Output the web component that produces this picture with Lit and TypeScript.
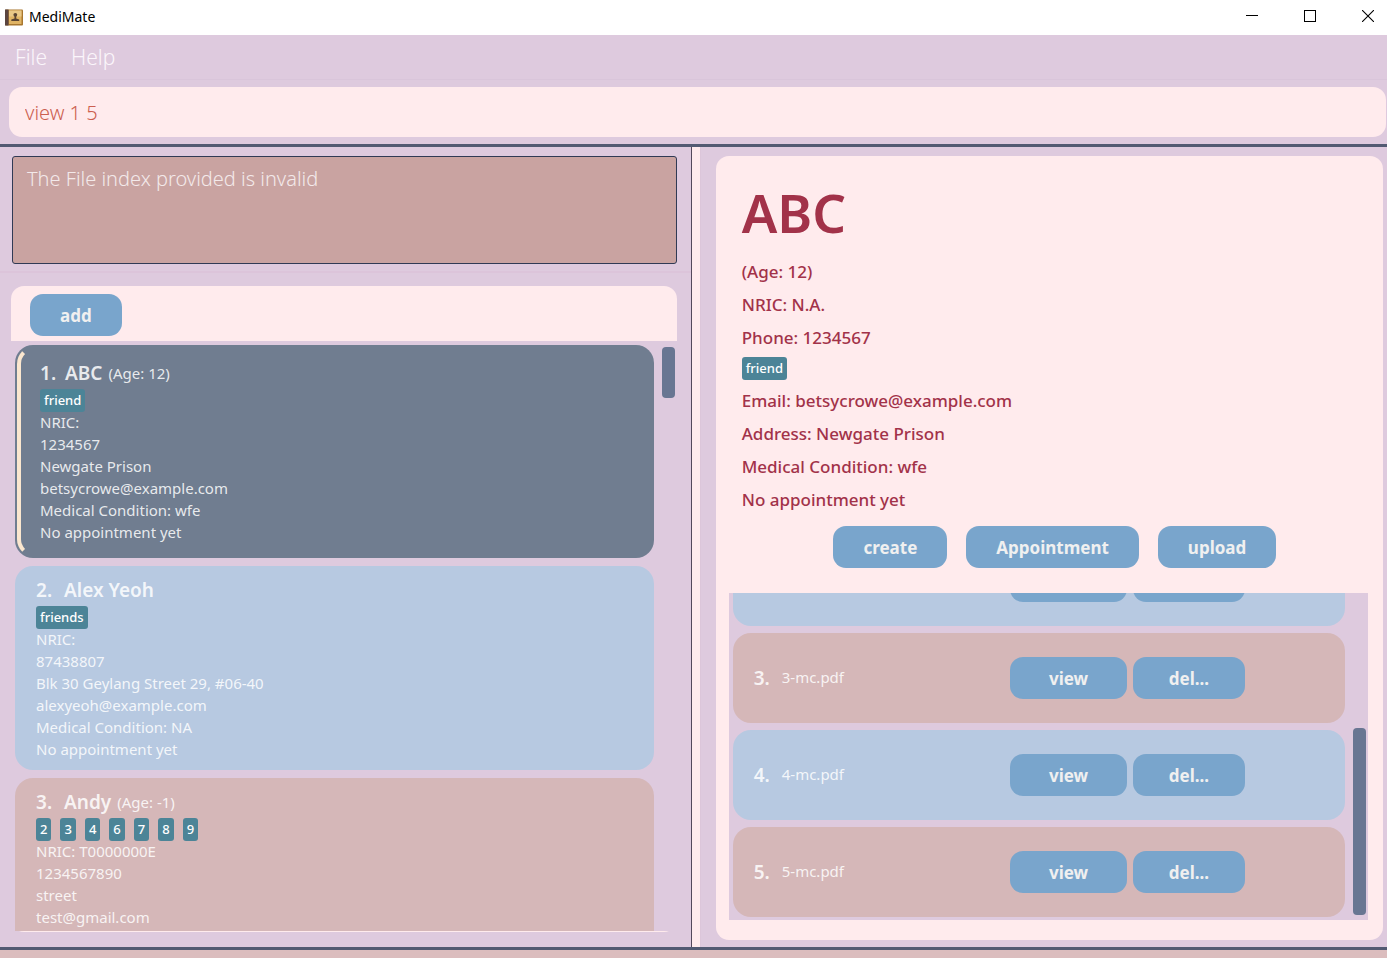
import { LitElement, html, css, nothing } from "lit";
import { customElement, property, state } from "lit/decorators.js";
import { classMap } from "lit/directives/class-map.js";

interface Patient {
  name: string;
  age?: string;
  tags: string[];
  lines: string[];
}

const PATIENTS: Patient[] = [
  {
    name: "ABC",
    age: "12",
    tags: ["friend"],
    lines: ["NRIC:", "1234567", "Newgate Prison", "betsycrowe@example.com", "Medical Condition: wfe", "No appointment yet"],
  },
  {
    name: "Alex Yeoh",
    tags: ["friends"],
    lines: ["NRIC:", "87438807", "Blk 30 Geylang Street 29, #06-40", "alexyeoh@example.com", "Medical Condition: NA", "No appointment yet"],
  },
  {
    name: "Andy",
    age: "-1",
    tags: ["2", "3", "4", "6", "7", "8", "9"],
    lines: ["NRIC: T0000000E", "1234567890", "street", "test@gmail.com", "Medical Condition: NA", "No appointment yet"],
  },
];

const buttonStyles = css`
  .btn {
    height: 42px;
    padding: 2px 30px 0;
    border: 0;
    border-radius: 13px;
    background: #79a5cc;
    color: #f0f0f0;
    font: 700 17px/24px "Noto Sans", "Open Sans", sans-serif;
    cursor: pointer;
  }
`;

const tagStyles = css`
  .tag {
    height: 23px;
    padding: 0 4px;
    border-radius: 3px;
    background: #4c8497;
    color: #fff;
    font: 500 13px/22px "Noto Sans", "Open Sans", sans-serif;
  }
`;

@customElement("title-bar")
export class TitleBar extends LitElement {
  static styles = css`
    :host {
      display: flex;
      align-items: center;
      flex: none;
      height: 35px;
      padding: 0 13px 0 5px;
      box-sizing: border-box;
      background: #fff;
      color: #000;
    }
    .logo {
      display: block;
      margin-right: 6px;
    }
    .title {
      flex: 1;
      padding-bottom: 2px;
      font-size: 14px;
      line-height: 32px;
    }
    .controls {
      display: flex;
      gap: 46px;
      padding-bottom: 3px;
    }
    .control {
      width: 12px;
      height: 12px;
      padding: 0;
      border: 0;
      background: none;
    }
    .control svg {
      display: block;
    }
  `;

  render() {
    return html`
      <svg class="logo" width="18" height="18" viewBox="0 0 18 18" aria-hidden="true">
        <rect x="0" y="0.5" width="18" height="16" rx="1" fill="#a8772f" />
        <rect x="0" y="0.5" width="3.5" height="16" fill="#5a4540" />
        <rect x="4" y="1.5" width="12.5" height="13.5" fill="#e0b464" />
        <rect x="4" y="1.5" width="12.5" height="6" fill="#e9c887" />
        <circle cx="10.3" cy="5.8" r="1.9" fill="#5a4432" />
        <path d="M9.5 7h1.700v2.500l3 1v1.500H6.300v-1.500l3.200-1z" fill="#5a4432" />
      </svg>
      <span class="title">MediMate</span>
      <div class="controls">
        <button class="control" aria-label="Minimize">
          <svg width="12" height="12" viewBox="0 0 12 12"><path d="M0 5.5h12" stroke="#000" /></svg>
        </button>
        <button class="control" aria-label="Maximize">
          <svg width="12" height="12" viewBox="0 0 12 12"><rect x="0.5" y="0.5" width="11" height="11" fill="none" stroke="#000" /></svg>
        </button>
        <button class="control" aria-label="Close">
          <svg width="12" height="12" viewBox="0 0 12 12"><path d="M0 0l12 12M12 0L0 12" stroke="#000" stroke-width="1.1" /></svg>
        </button>
      </div>
    `;
  }
}

@customElement("patient-card")
export class PatientCard extends LitElement {
  @property({ attribute: false }) patient!: Patient;
  @property({ type: Number }) index = 1;
  @property({ type: Boolean }) selected = false;

  static styles = [
    tagStyles,
    css`
      :host {
        display: block;
        flex: none;
      }
      .card {
        position: relative;
        padding: 10px 21px;
        border-radius: 18px;
        background: #b7c9e1;
        color: rgba(255, 255, 255, 0.85);
        font-size: 15px;
        line-height: 22px;
      }
      .odd {
        background: #d5b7b8;
      }
      .selected {
        padding: 14px 25px 15px;
        background: #707d90;
      }
      .selected::before {
        content: "";
        position: absolute;
        inset: 1px 2px;
        border: 4px solid transparent;
        border-left-color: #fbe7cf;
        border-radius: 18px;
      }
      .head {
        display: flex;
        height: 30px;
        line-height: 28px;
      }
      .number {
        width: 28px;
      }
      .number,
      .name {
        font-size: 19px;
        font-weight: 600;
      }
      .selected .number {
        width: 25px;
      }
      .age {
        margin-left: 6px;
      }
      .tags {
        display: flex;
        align-items: flex-start;
        gap: 9px;
        height: 22px;
      }
    `,
  ];

  render() {
    const { name, age, tags, lines } = this.patient;
    return html`
      <article class=${classMap({ card: true, odd: this.index % 2 === 1, selected: this.selected })}>
        <div class="head">
          <span class="number">${this.index}.</span>
          <span class="name">${name}</span>
          ${age ? html`<span class="age">(Age: ${age})</span>` : nothing}
        </div>
        <div class="tags">${tags.map((t) => html`<span class="tag">${t}</span>`)}</div>
        ${lines.map((l) => html`<div>${l}</div>`)}
      </article>
    `;
  }
}

@customElement("file-row")
export class FileRow extends LitElement {
  @property({ type: Number }) index = 1;

  static styles = [
    buttonStyles,
    css`
      :host {
        display: block;
        flex: none;
      }
      .row {
        display: flex;
        align-items: center;
        height: 90px;
        padding: 0 100px 0 21px;
        box-sizing: border-box;
        border-radius: 18px;
        background: #b7c9e1;
        color: rgba(255, 255, 255, 0.85);
      }
      .odd {
        background: #d5b7b8;
      }
      .number {
        width: 28px;
        font-size: 19px;
        font-weight: 600;
      }
      .file {
        flex: 1;
        padding-bottom: 2px;
        font-size: 15px;
      }
      .actions {
        display: flex;
        gap: 6px;
      }
      .view {
        width: 117px;
      }
      .delete {
        width: 112px;
      }
    `,
  ];

  render() {
    return html`
      <div class=${classMap({ row: true, odd: this.index % 2 === 1 })}>
        <span class="number">${this.index}.</span>
        <span class="file">${this.index}-mc.pdf</span>
        <div class="actions">
          <button class="btn view">view</button>
          <button class="btn delete">del...</button>
        </div>
      </div>
    `;
  }
}

@customElement("patient-detail")
export class PatientDetail extends LitElement {
  static styles = [
    buttonStyles,
    tagStyles,
    css`
      :host {
        display: flex;
        flex-direction: column;
        min-height: 0;
        padding: 17px 15px 20px 13px;
        box-sizing: border-box;
        border-radius: 13px;
        background: #ffebed;
        color: #a23249;
      }
      .info {
        flex: none;
        padding-left: 13px;
        font-size: 17px;
        font-weight: 500;
        line-height: 33px;
      }
      .name {
        margin: 0 0 2px;
        font-size: 53px;
        font-weight: 600;
        line-height: 80px;
      }
      .tags {
        display: flex;
        align-items: flex-start;
        height: 30px;
        padding-top: 3px;
        box-sizing: border-box;
      }
      .actions {
        display: flex;
        justify-content: center;
        gap: 19px;
        padding: 10px 0 25px;
      }
      .files {
        display: flex;
        flex: 1;
        min-height: 0;
        overflow: hidden;
        background: #decade;
      }
      .rows {
        display: flex;
        flex: 1;
        flex-direction: column;
        justify-content: flex-end;
        gap: 7px;
        padding: 0 8px 3px 4px;
      }
      .thumb {
        align-self: flex-end;
        width: 13px;
        height: 187px;
        margin: 0 2px 5px 0;
        border-radius: 4px;
        background: #687692;
      }
    `,
  ];

  render() {
    return html`
      <div class="info">
        <h1 class="name">ABC</h1>
        <div>(Age: 12)</div>
        <div>NRIC: N.A.</div>
        <div>Phone: 1234567</div>
        <div class="tags"><span class="tag">friend</span></div>
        <div>Email: betsycrowe@example.com</div>
        <div>Address: Newgate Prison</div>
        <div>Medical Condition: wfe</div>
        <div>No appointment yet</div>
        <div class="actions">
          <button class="btn">create</button>
          <button class="btn">Appointment</button>
          <button class="btn">upload</button>
        </div>
      </div>
      <div class="files">
        <div class="rows">${[2, 3, 4, 5].map((i) => html`<file-row .index=${i}></file-row>`)}</div>
        <div class="thumb"></div>
      </div>
    `;
  }
}

@customElement("app-root")
export class AppRoot extends LitElement {
  @state() private command = "view 1 5";

  static styles = [
    buttonStyles,
    css`
      :host {
        display: flex;
        flex-direction: column;
        height: 100vh;
        overflow: hidden;
        background: #decade;
        font-family: "Noto Sans", "Open Sans", sans-serif;
      }
      .menu {
        display: flex;
        flex: none;
        gap: 24px;
        height: 45px;
        padding: 0 15px;
        box-sizing: border-box;
        border-bottom: 1px solid #d9c5da;
      }
      .menu-item {
        padding: 0;
        border: 0;
        background: none;
        color: #fbf6fb;
        font: 300 21px/42px "Noto Sans", "Open Sans", sans-serif;
      }
      .command {
        flex: none;
        padding: 7px 1px 7px 9px;
        border-bottom: 3px solid #525a72;
      }
      .command-input {
        display: block;
        width: 100%;
        height: 50px;
        padding: 0 16px;
        box-sizing: border-box;
        border: 0;
        border-radius: 13px;
        outline: 0;
        background: #ffebed;
        color: #cc5f50;
        font: 300 20px/30px "Noto Sans", "Open Sans", sans-serif;
      }
      .split {
        display: flex;
        flex: 1;
        min-height: 0;
      }
      .left {
        display: flex;
        flex: none;
        flex-direction: column;
        width: 49.8%;
        box-sizing: border-box;
      }
      .message {
        flex: none;
        padding: 9px 14px 7px 12px;
        border-bottom: 2px solid #dcc4da;
      }
      .message-box {
        display: block;
        width: 100%;
        height: 108px;
        padding: 7px 14px;
        box-sizing: border-box;
        border: 1px solid #303a55;
        border-radius: 3px;
        outline: 0;
        resize: none;
        overflow: hidden;
        background: #c9a3a1;
        color: #f3e9ea;
        font: 300 20px/30px "Noto Sans", "Open Sans", sans-serif;
      }
      .people {
        display: flex;
        flex: 1;
        flex-direction: column;
        min-height: 0;
        margin: 13px 14px 15px 11px;
        padding-bottom: 1px;
        border-radius: 13px;
        background: #ffebed;
      }
      .toolbar {
        flex: none;
        padding: 8px 19px 5px;
      }
      .scroll {
        display: flex;
        flex: 1;
        min-height: 0;
        overflow: hidden;
        background: #decade;
      }
      .cards {
        display: flex;
        flex: 1;
        flex-direction: column;
        gap: 8px;
        padding: 4px 8px 0 4px;
      }
      .thumb {
        width: 13px;
        height: 51px;
        margin: 6px 2px 0 0;
        border-radius: 4px;
        background: #687692;
      }
      .divider {
        flex: none;
        width: 10px;
        box-sizing: border-box;
        border-left: 1px solid #54495c;
        border-right: 1px solid #dcc6da;
        background: #ffebed;
      }
      .detail {
        flex: 1;
        margin: 9px 4px 7px 15px;
      }
      .status {
        flex: none;
        height: 11px;
        box-sizing: border-box;
        border-top: 3px solid #525a72;
        background: #dbbdbe;
      }
    `,
  ];

  private onInput(e: Event) {
    this.command = (e.target as HTMLInputElement).value;
  }

  render() {
    return html`
      <title-bar></title-bar>
      <nav class="menu">
        <button class="menu-item">File</button>
        <button class="menu-item">Help</button>
      </nav>
      <div class="command">
        <input class="command-input" type="text" aria-label="Command" .value=${this.command} @input=${this.onInput} />
      </div>
      <main class="split">
        <section class="left">
          <div class="message">
            <textarea class="message-box" readonly aria-label="Result" .value=${"The File index provided is invalid"}></textarea>
          </div>
          <div class="people">
            <div class="toolbar"><button class="btn">add</button></div>
            <div class="scroll">
              <div class="cards">
                ${PATIENTS.map((p, i) => html`<patient-card .patient=${p} .index=${i + 1} .selected=${i === 0}></patient-card>`)}
              </div>
              <div class="thumb"></div>
            </div>
          </div>
        </section>
        <div class="divider"></div>
        <patient-detail class="detail"></patient-detail>
      </main>
      <footer class="status"></footer>
    `;
  }
}
